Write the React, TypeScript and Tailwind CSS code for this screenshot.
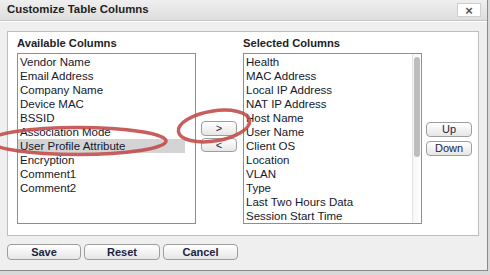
import React from "react";

const available = [
  "Vendor Name",
  "Email Address",
  "Company Name",
  "Device MAC",
  "BSSID",
  "Association Mode",
  "User Profile Attribute",
  "Encryption",
  "Comment1",
  "Comment2",
];

const selected = [
  "Health",
  "MAC Address",
  "Local IP Address",
  "NAT IP Address",
  "Host Name",
  "User Name",
  "Client OS",
  "Location",
  "VLAN",
  "Type",
  "Last Two Hours Data",
  "Session Start Time",
];

function Btn({ children, className = "" }: { children: React.ReactNode; className?: string }) {
  return (
    <button
      className={
        "flex items-center justify-center rounded-[4px] border border-[#9d9d9d] bg-gradient-to-b from-white to-[#e6e6e6] text-[#1b2440] leading-none " +
        className
      }
    >
      {children}
    </button>
  );
}

function ListBox({ items, highlight, scroll }: { items: string[]; highlight?: number; scroll?: boolean }) {
  return (
    <div className="relative flex h-[171px] w-[179px] border border-[#8e8e8e] bg-white">
      <ul className="flex-1 pr-[10px] pt-[1px]">
        {items.map((it, i) => (
          <li
            key={it}
            className={
              "h-[14px] truncate pl-[2px] text-[11.5px] leading-[14px] text-[#14182c] " +
              (i === highlight ? "bg-[#d4d4d4]" : "")
            }
          >
            {it}
          </li>
        ))}
      </ul>
      {scroll && (
        <div className="absolute right-0 top-0 h-full w-[9px] border-l border-[#e4e4e4] bg-gradient-to-r from-[#f6f6f6] to-white">
          <div className="ml-[1px] mt-[3px] h-[100px] w-[6px] rounded-full bg-[#bdbdbd]" />
        </div>
      )}
    </div>
  );
}

export default function App() {
  return (
    <div
      className="relative h-[275px] w-[490px] overflow-hidden bg-[#d9d9d9]"
      style={{ fontFamily: '"Liberation Sans", Arial, sans-serif' }}
    >
      <div className="flex h-[271px] w-[488px] flex-col border-b border-r border-[#8a8a8a] bg-[#efefef]">
        <div className="flex h-[21px] items-center justify-between border-b border-[#c4c4c4] bg-gradient-to-b from-[#efefef] to-[#dedede] pl-[7px] pr-[6px]">
          <span className="text-[11.4px] font-bold text-[#1e1e1e]">Customize Table Columns</span>
          <div className="flex h-[14px] w-[24px] items-center justify-center border border-[#cfcfcf] bg-white text-[13px] font-bold leading-none text-[#555]">
            ×
          </div>
        </div>

        <div className="flex flex-1 flex-col border-t border-white px-[7px] pt-[9px]">
          <div className="flex h-[205px] w-[472px] gap-[5px] border border-[#bdbdbd] bg-white pl-[9px] pt-[4px]">
            <div className="flex flex-col">
              <div className="h-[14px] text-[11.2px] font-bold leading-[14px] text-[#1e1e1e]">Available Columns</div>
              <div className="mt-[3px]">
                <ListBox items={available} highlight={6} />
              </div>
            </div>

            <div className="flex flex-col gap-[2px] pt-[85px]">
              <Btn className="h-[15px] w-[36px] text-[11px]">&gt;</Btn>
              <Btn className="h-[14px] w-[36px] text-[11px]">&lt;</Btn>
            </div>

            <div className="ml-[1px] flex flex-col">
              <div className="h-[14px] text-[11.2px] font-bold leading-[14px] text-[#1e1e1e]">Selected Columns</div>
              <div className="mt-[3px]">
                <ListBox items={selected} scroll />
              </div>
            </div>

            <div className="ml-[-1px] flex flex-col gap-[4px] pt-[86px]">
              <Btn className="h-[15px] w-[46px] text-[11px]">Up</Btn>
              <Btn className="h-[15px] w-[46px] text-[11px]">Down</Btn>
            </div>
          </div>

          <div className="mt-[8px] flex gap-[3px]">
            <Btn className="h-[16px] w-[74px] text-[11px] font-bold">Save</Btn>
            <Btn className="h-[16px] w-[76px] text-[11px] font-bold">Reset</Btn>
            <Btn className="h-[16px] w-[75px] text-[11px] font-bold">Cancel</Btn>
          </div>
        </div>
      </div>

      <svg className="pointer-events-none absolute left-0 top-0" width="490" height="275" viewBox="0 0 490 275">
        <ellipse cx="78" cy="141" rx="88" ry="13.5" fill="none" stroke="#c24e4a" strokeOpacity="0.9" strokeWidth="3.5" />
        <ellipse
          cx="214"
          cy="126"
          rx="36"
          ry="15"
          fill="none"
          stroke="#c24e4a"
          strokeOpacity="0.9"
          strokeWidth="3.5"
          transform="rotate(-9 214 126)"
        />
      </svg>
    </div>
  );
}
